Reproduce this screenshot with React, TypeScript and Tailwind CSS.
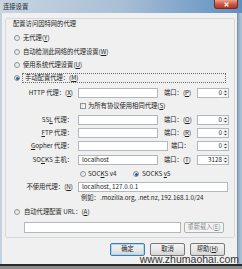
import React from "react";

function Radio({ checked }: { checked?: boolean }) {
  return (
    <span className="w-[6px] h-[6px] rounded-full border border-[#8e9399] bg-gradient-to-br from-[#dcdcdc] to-[#fbfbfb] flex items-center justify-center shrink-0">
      {checked && <span className="w-[3px] h-[3px] rounded-full bg-[#2a5e93]" />}
    </span>
  );
}

function Spinner() {
  return (
    <svg width="5" height="8" viewBox="0 0 5 8" className="shrink-0">
      <rect x="0" y="0" width="5" height="8" fill="#f4f4f4" />
      <line x1="0" y1="4" x2="5" y2="4" stroke="#c8c8c8" strokeWidth="0.6" />
      <path d="M1 3 L2.5 1.4 L4 3 Z" fill="#444" />
      <path d="M1 5 L2.5 6.6 L4 5 Z" fill="#444" />
    </svg>
  );
}

function Port({ value, className }: { value: string; className?: string }) {
  return (
    <div className={"w-[32px] h-[10px] bg-white border border-[#b3b8bf] flex items-center " + (className ?? "")}>
      <span className="flex-1 text-right pr-[1px]">{value}</span>
      <Spinner />
    </div>
  );
}

function Field({ className, children }: { className?: string; children?: React.ReactNode }) {
  return (
    <div className={"h-[10px] bg-white border border-[#b3b8bf] flex items-center pl-[3px] " + (className ?? "")}>
      {children}
    </div>
  );
}

function Btn({ children, primary }: { children: React.ReactNode; primary?: boolean }) {
  return (
    <div
      className={
        "w-[35px] h-[13px] rounded-[2px] border flex items-center justify-center bg-gradient-to-b from-[#f3f3f3] via-[#e9e9e9] to-[#d6d6d6] " +
        (primary ? "border-[#3c7fb1] shadow-[inset_0_0_0_1px_#a8d6f3]" : "border-[#7a7a7a]")
      }
    >
      {children}
    </div>
  );
}

export default function App() {
  return (
    <div className="w-[242px] h-[269px] overflow-hidden relative flex flex-col bg-[#f0f0f0] text-[#1e1e1e] text-[6.3px] leading-none whitespace-nowrap font-['Noto_Sans_CJK_SC',sans-serif]">
      {/* title bar */}
      <div className="h-[13px] shrink-0 flex items-start justify-between bg-gradient-to-r from-[#c9d5e0] via-[#a8bfd5] to-[#5f8fc0]">
        <span className="pl-[3px] pt-[4px] text-[#1b2733]">连接设置</span>
        <div className="mr-[4px] w-[24px] h-[9px] rounded-b-[3px] border border-t-0 border-[#7b2a20] bg-gradient-to-b from-[#e6a392] via-[#d05a45] to-[#b8331f] flex items-center justify-center">
          <svg width="5" height="5" viewBox="0 0 5 5">
            <path d="M0.6 0.6 L4.4 4.4 M4.4 0.6 L0.6 4.4" stroke="#fff" strokeWidth="1.3" />
          </svg>
        </div>
      </div>

      {/* body */}
      <div className="h-[251px] shrink-0 flex">
        <div className="w-[2px] bg-[#c3d1de]" />
        <div className="w-[235px] bg-[#f0f0f0] pl-[3px] pr-[2px] pt-[5px] flex flex-col">
          {/* group box */}
          <div className="w-[230px] h-[220px] border border-[#d3d9df] rounded-[2px] flex flex-col">
            <div className="h-[10px] flex items-center ml-[7px]">配置访问因特网的代理</div>

            <div className="h-[10px] mt-[4px] flex items-center ml-[8px] gap-[3px]">
              <Radio />
              <span>无代理(<u>Y</u>)</span>
            </div>
            <div className="h-[10px] mt-[4px] flex items-center ml-[8px] gap-[3px]">
              <Radio />
              <span>自动检测此网络的代理设置(<u>W</u>)</span>
            </div>
            <div className="h-[10px] mt-[3px] flex items-center ml-[8px] gap-[3px]">
              <Radio />
              <span>使用系统代理设置(<u>U</u>)</span>
            </div>
            <div className="h-[10px] mt-[3px] flex items-center ml-[8px] gap-[2px]">
              <Radio checked />
              <div className="w-[204px] h-[10px] border border-dotted border-[#6b6b6b] flex items-center pl-[2px]">
                手动配置代理：(<u>M</u>)
              </div>
            </div>

            {/* HTTP */}
            <div className="h-[10px] mt-[5px] flex items-center">
              <div className="w-[67px] text-right">HTTP 代理：(<u>X</u>)</div>
              <Field className="ml-[5px] w-[80px]" />
              <div className="ml-[6px] w-[29px]">端口：(<u>P</u>)</div>
              <Port className="ml-[4px]" value="0" />
            </div>

            <div className="h-[10px] mt-[3px] flex items-center ml-[74px] gap-[2px]">
              <span className="w-[6px] h-[6px] border border-[#8e9399] bg-gradient-to-br from-[#e0e0e0] to-white shrink-0" />
              <span>为所有协议使用相同代理(<u>S</u>)</span>
            </div>

            <div className="h-[10px] mt-[4px] flex items-center">
              <div className="w-[67px] text-right">SS<u>L</u> 代理：</div>
              <Field className="ml-[5px] w-[80px]" />
              <div className="ml-[6px] w-[29px]">端口：(<u>O</u>)</div>
              <Port className="ml-[4px]" value="0" />
            </div>
            <div className="h-[10px] mt-[3px] flex items-center">
              <div className="w-[67px] text-right"><u>F</u>TP 代理：</div>
              <Field className="ml-[5px] w-[80px]" />
              <div className="ml-[6px] w-[29px]">端口：(<u>R</u>)</div>
              <Port className="ml-[4px]" value="0" />
            </div>
            <div className="h-[10px] mt-[3px] flex items-center">
              <div className="w-[67px] text-right"><u>G</u>opher 代理：</div>
              <Field className="ml-[5px] w-[90px]" />
              <div className="ml-[3px] w-[22px]">端口：</div>
              <Port className="ml-[4px]" value="0" />
            </div>
            <div className="h-[10px] mt-[4px] flex items-center">
              <div className="w-[67px] text-right">SO<u>C</u>KS 主机：</div>
              <Field className="ml-[5px] w-[80px]">localhost</Field>
              <div className="ml-[6px] w-[29px]">端口：(<u>T</u>)</div>
              <Port className="ml-[4px]" value="3128" />
            </div>

            <div className="h-[10px] mt-[4px] flex items-center ml-[74px]">
              <Radio />
              <span className="ml-[2px] w-[45px]">SOC<u>K</u>S v4</span>
              <Radio checked />
              <span className="ml-[3px]">SOCKS <u>v</u>5</span>
            </div>

            <div className="h-[10px] mt-[3px] flex items-center">
              <div className="w-[67px] text-right">不使用代理：(<u>N</u>)</div>
              <Field className="ml-[5px] w-[150px]">localhost, 127.0.0.1</Field>
            </div>
            <div className="h-[10px] mt-[1px] flex items-center ml-[75px]">
              例如：.mozilla.org, .net.nz, 192.168.1.0/24
            </div>

            <div className="h-[10px] mt-[4px] flex items-center ml-[8px] gap-[4px]">
              <Radio />
              <span>自动代理配置 URL：(<u>A</u>)</span>
            </div>
            <div className="h-[11px] mt-[5px] flex items-center ml-[18px]">
              <Field className="w-[157px] h-[11px]" />
              <div className="ml-[3px] w-[40px] h-[11px] rounded-[2px] border border-[#adb2b5] bg-[#f4f4f4] flex items-center justify-center text-[#8d8d8d]">
                重新载入(<u>E</u>)
              </div>
            </div>
          </div>

          {/* buttons */}
          <div className="mt-[5px] flex justify-end gap-[5px] pr-[10px]">
            <Btn primary>确定</Btn>
            <Btn>取消</Btn>
            <Btn>帮助(<u>H</u>)</Btn>
          </div>
        </div>
        <div className="w-[5px] bg-gradient-to-r from-[#8ea9c4] to-[#b3c7da] border-l border-[#7d92a8]" />
      </div>
      <div className="h-[2px] shrink-0 bg-[#2b2b2b]" />
      <div className="flex-1 bg-[#8c8c8c]" />

      {/* watermark */}
      <div className="absolute right-[3px] top-[254px] text-[10.5px] leading-[11px] text-[#333] font-['Liberation_Sans',sans-serif]">
        www.zhumaohai.com
      </div>
    </div>
  );
}
